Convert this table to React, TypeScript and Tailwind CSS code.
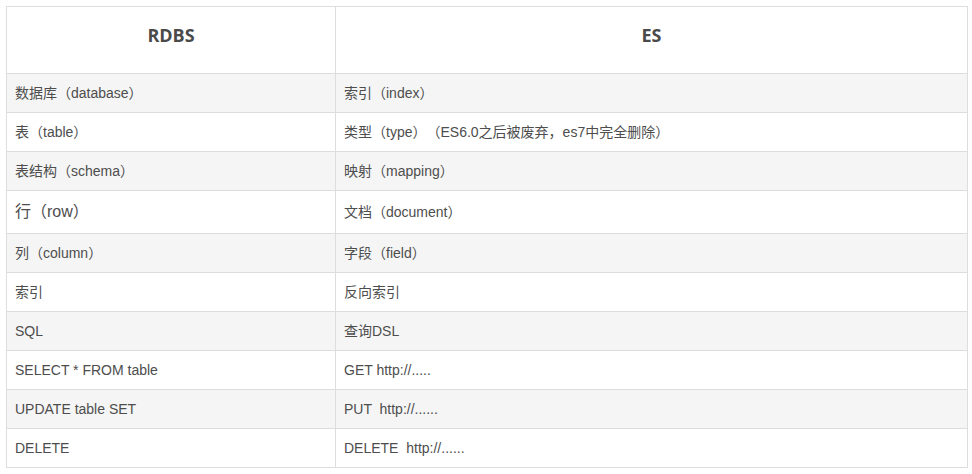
const rows: [string, string, boolean?][] = [
  ['数据库（database）', '索引（index）'],
  ['表（table）', '类型（type）（ES6.0之后被废弃，es7中完全删除）'],
  ['表结构（schema）', '映射（mapping）'],
  ['行（row）', '文档（document）', true],
  ['列（column）', '字段（field）'],
  ['索引', '反向索引'],
  ['SQL', '查询DSL'],
  ['SELECT * FROM table', 'GET http://.....'],
  ['UPDATE table SET', 'PUT  http://......'],
  ['DELETE', 'DELETE  http://......'],
];

const App = () => {
  return (
    <div className="bg-white min-h-screen p-[6px]">
      <table
        className="border-collapse table-fixed w-[962px] text-[#4d4d4d] [text-spacing-trim:space-all]"
        style={{ fontFamily: '"Liberation Sans", Arial, "Noto Sans CJK SC", sans-serif' }}
      >
        <colgroup>
          <col className="w-[329px]" />
          <col />
        </colgroup>
        <thead>
          <tr>
            <th
              className="border border-[#dddddd] h-[67px] pb-[9px] align-middle text-center font-bold text-[18px] text-[#4a4a4a]"
              style={{ fontFamily: '"Open Sans", "Noto Sans CJK SC", sans-serif' }}
            >
              RDBS
            </th>
            <th
              className="border border-[#dddddd] h-[67px] pb-[9px] align-middle text-center font-bold text-[18px] text-[#4a4a4a]"
              style={{ fontFamily: '"Open Sans", "Noto Sans CJK SC", sans-serif' }}
            >
              ES
            </th>
          </tr>
        </thead>
        <tbody>
          {rows.map(([a, b, big], i) => (
            <tr key={i} className={i % 2 === 0 ? 'bg-[#f5f5f5]' : 'bg-white'}>
              <td
                className={
                  big
                    ? 'border border-[#dddddd] px-2 py-2 text-[16px] leading-[26px] whitespace-pre'
                    : 'border border-[#dddddd] px-2 py-2 text-[14px] leading-[22px] whitespace-pre'
                }
              >
                {a}
              </td>
              <td className="border border-[#dddddd] px-2 py-2 text-[14px] leading-[22px] whitespace-pre">{b}</td>
            </tr>
          ))}
        </tbody>
      </table>
    </div>
  );
};

export default App;
